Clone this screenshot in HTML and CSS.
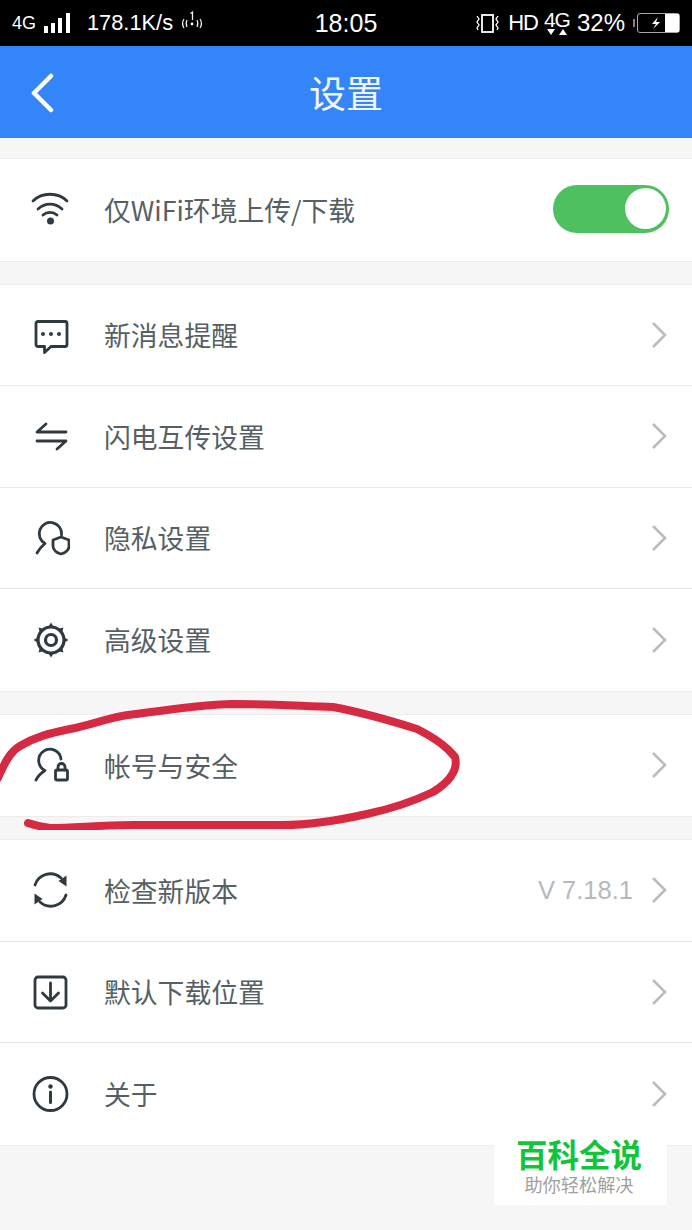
FILE: index.html
```html
<!DOCTYPE html>
<html lang="zh-CN">
<head>
  <meta charset="UTF-8" />
  <meta name="viewport" content="width=device-width, initial-scale=1.0" />
  <title>设置</title>
  <link rel="stylesheet" href="styles.css">
</head>
<body>

  <div class="status">
    <div class="status-left">
      <span class="net">4G</span>
      <svg class="bars" width="29" height="22" viewBox="0 0 29 22"><path d="M1 14h4v7H1zM8 11h4v10H8zM15 6h4v15h-4zM23 1h4v20h-4z" fill="#fff"/></svg>
      <span class="speed">178.1K/s</span>
      <svg class="hotspot" width="26" height="24" viewBox="0 0 26 24" fill="none" stroke="#eee" stroke-width="1.2"><path d="M5 9c-2 3-2 6 0 9M8 10c-1 2-1 5 0 7M18 10c1 2 1 5 0 7M21 9c2 3 2 6 0 9"/><circle cx="13" cy="14" r="1.4" fill="#fff" stroke="none"/><path d="M11.500 3.500l2-1.500v8" stroke-width="1.3"/></svg>
    </div>
    <div class="time">18:05</div>
    <div class="status-right">
      <svg class="vibrate" width="28" height="22" viewBox="0 0 28 22" fill="none" stroke="#fff" stroke-width="1.3"><rect x="8" y="3" width="11" height="17" stroke-width="1.8"/><path d="M3 4l2 3-2 3 2 3-2 3 1 2M24 4l-2 3 2 3-2 3 2 3-1 2"/></svg>
      <span class="hd">HD</span>
      <span class="net-two">4G<svg width="24" height="7" viewBox="0 0 24 7" fill="#fff"><path d="M2 0h8L6 6zM14 6h8l-4-6z"/></svg></span>
      <span class="percent">32%</span>
      <svg class="battery" width="47" height="20" viewBox="0 0 47 20"><path d="M1 6v8" stroke="#aaa" stroke-width="1.500"/><rect x="4.500" y="0.500" width="42" height="19" rx="2.500" fill="none" stroke="#aaa"/><rect x="32" y="1" width="14" height="18" fill="#fff"/><path d="M25 4l-6 7h4l-3 5 7-7h-4z" fill="#fff"/></svg>
    </div>
  </div>

  <header class="nav">
    <svg class="back" width="26" height="40" viewBox="0 0 26 40" fill="none" stroke="#fff" stroke-width="4.500" stroke-linecap="round" stroke-linejoin="round"><path d="M22 3L5 20l17 17"/></svg>
    <h1>设置</h1>
  </header>

  <main>
    <section class="group">
      <div class="row">
        <svg class="icon" viewBox="0 0 40 40"><path d="M3 11C12 2 28 2 37 11M8 19c7-6.500 17-6.500 24 0M13 25c4-3.500 10-3.500 14 0"/><circle class="dot" cx="20.500" cy="31" r="3.500"/></svg>
        <span class="label">仅WiFi环境上传/下载</span>
        <span class="toggle"><span class="knob"></span></span>
      </div>
    </section>

    <section class="group">
      <div class="row">
        <svg class="icon" viewBox="0 0 40 40"><path d="M8 6.500h27a2 2 0 0 1 2 2v21a2 2 0 0 1-2 2H21l-6.500 6v-6H8a2 2 0 0 1-2-2v-21a2 2 0 0 1 2-2z"/><circle class="dot" cx="13" cy="19" r="2"/><circle class="dot" cx="21" cy="19" r="2"/><circle class="dot" cx="29" cy="19" r="2"/></svg>
        <span class="label">新消息提醒</span>
        <svg class="chevron" viewBox="0 0 16 28"><path d="M2 2l12 12L2 26"/></svg>
      </div>
      <div class="row">
        <svg class="icon" viewBox="0 0 40 40"><path d="M16 8L7 16h29M7 25h29l-9 8"/></svg>
        <span class="label">闪电互传设置</span>
        <svg class="chevron" viewBox="0 0 16 28"><path d="M2 2l12 12L2 26"/></svg>
      </div>
      <div class="row">
        <svg class="icon" viewBox="0 0 40 40"><path d="M7 35c2-4 5-7 8-9.500A11.200 11.200 0 1 1 31.500 17"/><path d="M31 19l8 3v6c0 4-4 7-8 8-4-1-8-4-8-8v-6z"/></svg>
        <span class="label">隐私设置</span>
        <svg class="chevron" viewBox="0 0 16 28"><path d="M2 2l12 12L2 26"/></svg>
      </div>
      <div class="row">
        <svg class="icon" viewBox="0 0 40 40"><circle class="ring" cx="21" cy="20" r="13"/><circle class="ring" cx="21" cy="20" r="5.500"/><path class="solid" d="M21 2.500l3 5h-6zM21 37.500l3-5h-6zM3.500 20l5 3v-6zM38.500 20l-5 3v-6zM8.600 7.600l1.400 5.700 4.300-4.300zM33.400 32.400l-1.400-5.700-4.300 4.300zM33.400 7.600l-5.700 1.400 4.300 4.300zM8.600 32.400l5.700-1.400-4.300-4.300z"/></svg>
        <span class="label">高级设置</span>
        <svg class="chevron" viewBox="0 0 16 28"><path d="M2 2l12 12L2 26"/></svg>
      </div>
    </section>

    <section class="group">
      <div class="row">
        <svg class="icon" viewBox="0 0 40 40"><path d="M6 35c2-4 5-7 9-9.500A11.200 11.200 0 1 1 31 14"/><path d="M28 25v-3a3.500 3.500 0 0 1 7 0v3"/><rect x="25.500" y="25" width="12" height="10" rx="1.500"/></svg>
        <span class="label">帐号与安全</span>
        <svg class="chevron" viewBox="0 0 16 28"><path d="M2 2l12 12L2 26"/></svg>
      </div>
    </section>

    <section class="group">
      <div class="row">
        <svg class="icon" viewBox="0 0 40 40"><path d="M5 15A16 16 0 0 1 31 8M36 25A16 16 0 0 1 10 32"/><path class="solid" d="M36.500 5.500v11l-8-5.500zM4.500 34.500v-11l8 5.500z"/></svg>
        <span class="label">检查新版本</span>
        <span class="version">V 7.18.1</span>
        <svg class="chevron" viewBox="0 0 16 28"><path d="M2 2l12 12L2 26"/></svg>
      </div>
      <div class="row">
        <svg class="icon" viewBox="0 0 40 40"><rect x="5" y="5" width="31" height="31" rx="3"/><path d="M20.500 11v18M12.500 21l8 8 8-8"/></svg>
        <span class="label">默认下载位置</span>
        <svg class="chevron" viewBox="0 0 16 28"><path d="M2 2l12 12L2 26"/></svg>
      </div>
      <div class="row">
        <svg class="icon" viewBox="0 0 40 40"><circle cx="20.500" cy="20" r="16.500"/><circle class="dot" cx="20.500" cy="12.500" r="2.200"/><path d="M20.500 18v10.500" stroke-width="3"/></svg>
        <span class="label">关于</span>
        <svg class="chevron" viewBox="0 0 16 28"><path d="M2 2l12 12L2 26"/></svg>
      </div>
    </section>
  </main>

  <!-- hand drawn circle on top of the screenshot -->
  <svg class="scribble" width="692" height="140" viewBox="0 690 692 140" fill="none"><path d="M-2 778C5 762 10 752 20 746C35 737 50 733 70 729C90 725 105 719 122 716C160 711 195 705 233 704C270 704 300 706 333 707C365 713 395 722 417 729C435 738 448 748 455 757C458 768 452 780 433 792C410 803 390 809 367 814C340 820 310 825 283 825C230 825 180 825 133 825C100 825 75 828 50 828C42 827 34 825 28 823" stroke="#d62a42" stroke-width="8" stroke-linecap="round" stroke-linejoin="round"/></svg>

  <div class="watermark">
    <div class="wm-title">百科全说</div>
    <div class="wm-sub">助你轻松解决</div>
  </div>

</body>
</html>
```

FILE: styles.css
```css
body {
  font-family: "Liberation Sans", "Noto Sans CJK SC", sans-serif;
  background: #f6f6f6;
  margin: 0;
  padding: 0;
  height: 1230px;
  overflow: hidden;
  position: relative;
}
.status {
  display: grid;
  grid-template-columns: 1fr auto 1fr;
  align-items: center;
  height: 46px;
  padding: 0 12px;
  box-sizing: border-box;
  background: #000;
  color: #fff;
}
.status-left, .status-right {
  display: flex;
  align-items: center;
}
.status-right {
  justify-content: flex-end;
}
.net {
  font-size: 18px;
  width: 31px;
}
.speed {
  font-size: 21.800px;
  margin-left: 15px;
}
.hotspot {
  margin-left: 6px;
  margin-bottom: 3px;
}
.time {
  font-size: 25px;
}
.hd {
  font-size: 22px;
  margin-left: 6px;
  letter-spacing: -1px;
}
.net-two {
  display: flex;
  flex-direction: column;
  align-items: center;
  font-size: 21px;
  line-height: 18px;
  margin-left: 6px;
  letter-spacing: -1px;
}
.percent {
  font-size: 24px;
  margin-left: 7px;
}
.battery {
  margin-left: 8px;
}
.nav {
  display: flex;
  align-items: center;
  justify-content: center;
  position: relative;
  height: 92px;
  background: #3485f7;
}
.nav h1 {
  margin: 0;
  font-size: 37px;
  font-weight: 400;
  color: #f2f7ff;
}
.back {
  position: absolute;
  left: 29px;
  top: 27px;
}
main {
  display: flex;
  flex-direction: column;
  gap: 22px;
  padding-top: 20px;
}
.group {
  background: #fff;
  border-top: 1px solid #ececec;
  border-bottom: 1px solid #ececec;
}
.row {
  display: flex;
  align-items: center;
  height: 101.500px;
  padding-left: 30px;
  padding-right: 25px;
  box-sizing: border-box;
  border-bottom: 1px solid #e8e8e8;
}
.row:last-child {
  border-bottom: none;
}
.icon {
  width: 40px;
  height: 40px;
  flex: none;
  fill: none;
  stroke: #2f3a40;
  stroke-width: 2.800;
  stroke-linecap: round;
  stroke-linejoin: round;
}
.icon .ring {
  stroke-width: 3.200;
}
.icon .dot, .icon .solid {
  fill: #2f3a40;
  stroke: none;
}
.label {
  margin-left: 34px;
  flex: 1;
  font-family: "Noto Sans CJK SC", sans-serif;
  font-size: 26.800px;
  color: #565f64;
}
.chevron {
  width: 16px;
  height: 28px;
  flex: none;
  fill: none;
  stroke: #bcbcbc;
  stroke-width: 2.600;
}
.version {
  font-size: 25.500px;
  color: #b6b9bb;
  margin-right: 18px;
}
.toggle {
  display: flex;
  justify-content: flex-end;
  align-items: center;
  width: 116px;
  height: 48px;
  margin-right: -2px;
  margin-bottom: 2px;
  padding-right: 3px;
  box-sizing: border-box;
  border-radius: 24px;
  background: #4fc05f;
}
.knob {
  width: 41px;
  height: 41px;
  border-radius: 50%;
  background: #fff;
}
.scribble {
  position: absolute;
  left: 0;
  top: 690px;
}
.watermark {
  position: absolute;
  left: 494px;
  top: 1143px;
  width: 173px;
  height: 62px;
  padding-right: 3px;
  box-sizing: border-box;
  background: #fff;
  text-align: center;
}
.wm-title {
  font-size: 31.500px;
  line-height: 36px;
  font-weight: 700;
  color: #12c43c;
  margin-top: -5px;
}
.wm-sub {
  font-size: 18.200px;
  line-height: 24px;
  color: #a0a0a0;
  margin-top: 0;
}
```
